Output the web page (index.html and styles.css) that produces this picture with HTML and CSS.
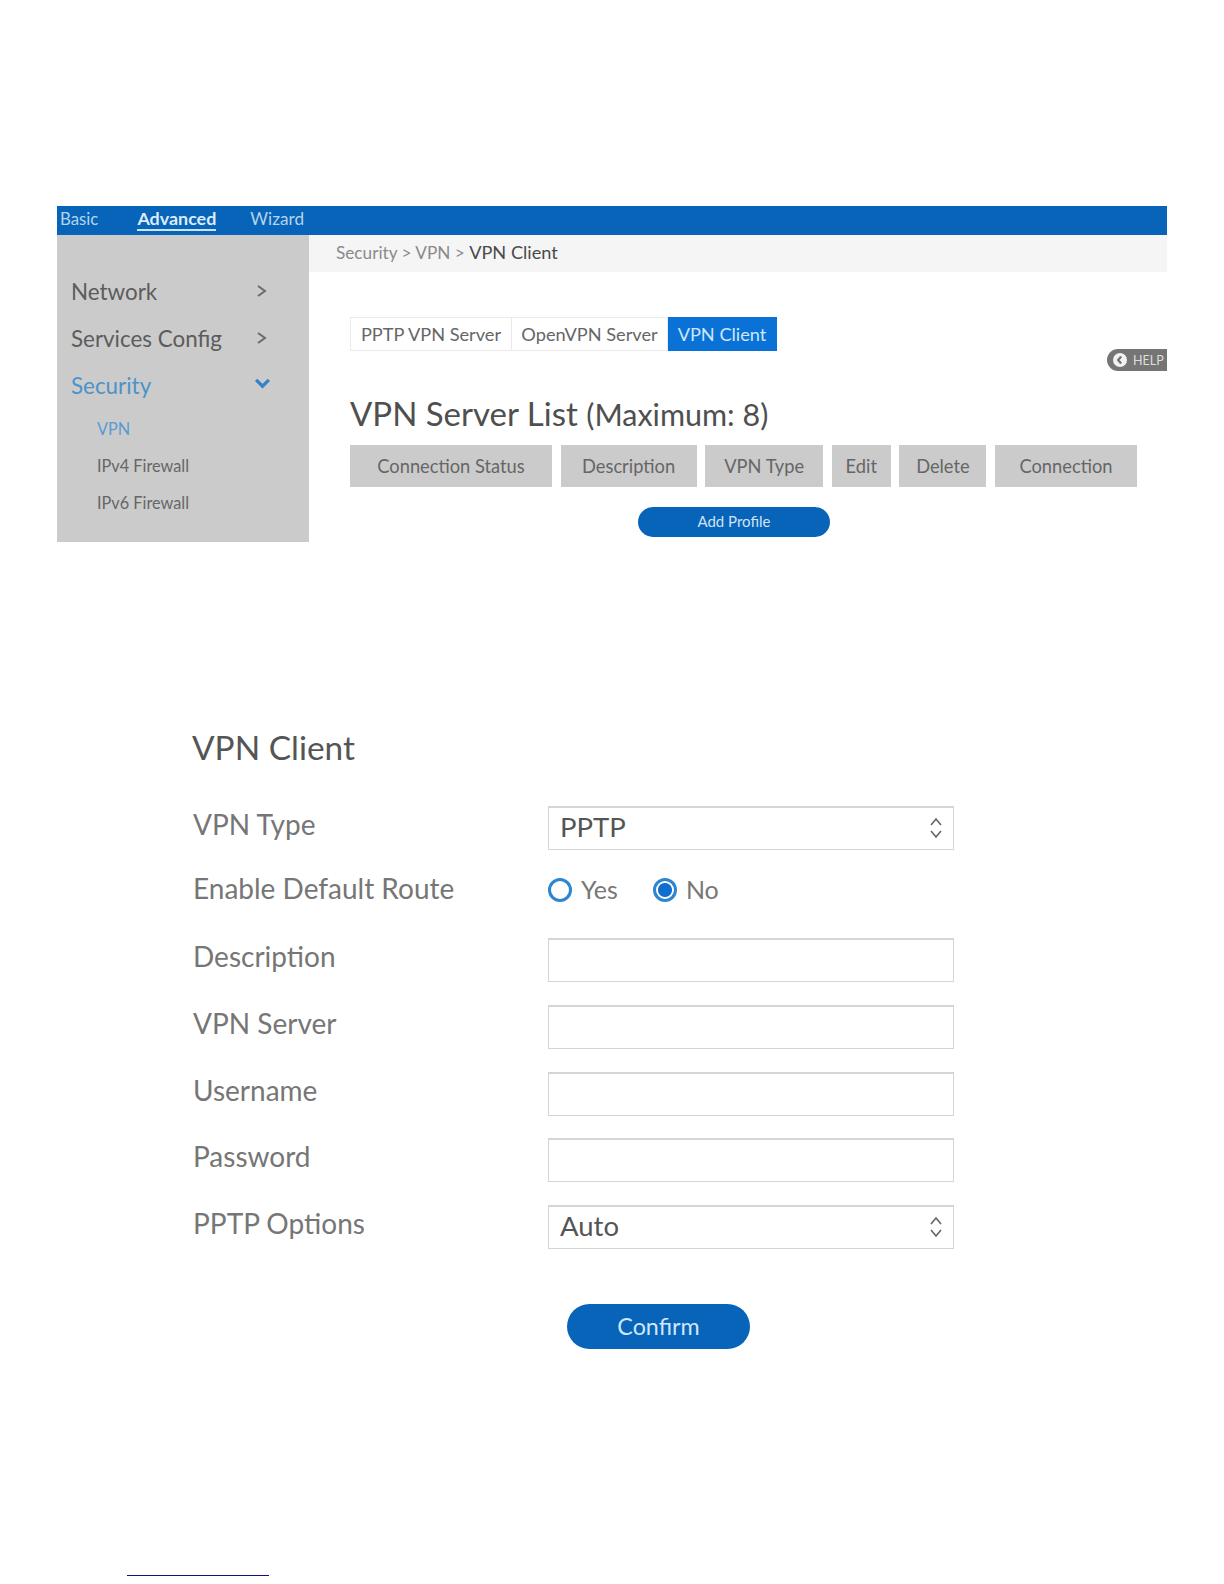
FILE: index.html
```html
<!DOCTYPE html>
<html lang="en">
<head>
<meta charset="utf-8">
<title>VPN Client</title>
<link rel="stylesheet" href="styles.css">
</head>
<body>
<section class="router">
  <nav class="topbar">
    <span class="top-link first">Basic</span>
    <span class="top-link active">Advanced</span>
    <span class="top-link last">Wizard</span>
  </nav>
  <div class="router-body">
    <aside class="sidebar">
      <div class="side-item"><span>Network</span>
        <svg class="chev" viewBox="0 0 12 14"><path d="M2 2l7 5-7 5"/></svg></div>
      <div class="side-item"><span>Services Config</span>
        <svg class="chev" viewBox="0 0 12 14"><path d="M2 2l7 5-7 5"/></svg></div>
      <div class="side-item current"><span>Security</span>
        <svg class="chev down" viewBox="0 0 16 12"><path d="M2 2.5l6 6 6-6"/></svg></div>
      <div class="sub-item current">VPN</div>
      <div class="sub-item">IPv4 Firewall</div>
      <div class="sub-item">IPv6 Firewall</div>
    </aside>
    <main class="content">
      <div class="crumbs">Security &gt; VPN &gt; <span class="crumb-now">VPN Client</span></div>
      <div class="tabs-row">
        <div class="tabs">
          <span class="tab t1">PPTP VPN Server</span>
          <span class="tab t2">OpenVPN Server</span>
          <span class="tab t3 selected">VPN Client</span>
        </div>
        <div class="help">
          <svg class="help-icon" viewBox="0 0 12 12"><circle cx="6" cy="6" r="6"/><path d="M7 3L4.4 6 7 9"/></svg>
          <span>HELP</span>
        </div>
      </div>
      <h2 class="list-title">VPN Server List <span class="list-max">(Maximum: 8)</span></h2>
      <div class="columns">
        <span class="col c1">Connection Status</span>
        <span class="col c2">Description</span>
        <span class="col c3">VPN Type</span>
        <span class="col c4">Edit</span>
        <span class="col c5">Delete</span>
        <span class="col c6">Connection</span>
      </div>
      <div class="add-wrap"><button class="add-btn">Add Profile</button></div>
    </main>
  </div>
</section>

<section class="form">
  <h1 class="form-title">VPN Client</h1>
  <div class="form-row r-type">
    <label>VPN Type</label>
    <div class="field select"><span>PPTP</span>
      <svg class="updown" viewBox="0 0 14 22"><path d="M2 8Q5 4.500 7 2Q9 4.500 12 8M2 14Q5 17.500 7 20Q9 17.500 12 14"/></svg></div>
  </div>
  <div class="form-row r-radio">
    <label>Enable Default Route</label>
    <div class="radios">
      <span class="radio"></span><span class="radio-text yes">Yes</span>
      <span class="radio on"></span><span class="radio-text">No</span>
    </div>
  </div>
  <div class="form-row r-input"><label>Description</label><div class="field"></div></div>
  <div class="form-row r-input"><label>VPN Server</label><div class="field"></div></div>
  <div class="form-row r-input"><label>Username</label><div class="field"></div></div>
  <div class="form-row r-input"><label>Password</label><div class="field"></div></div>
  <div class="form-row r-input"><label>PPTP Options</label>
    <div class="field select"><span>Auto</span>
      <svg class="updown" viewBox="0 0 14 22"><path d="M2 8Q5 4.500 7 2Q9 4.500 12 8M2 14Q5 17.500 7 20Q9 17.500 12 14"/></svg></div>
  </div>
  <div class="confirm-wrap"><button class="confirm">Confirm</button></div>
</section>

<div class="foot-rule"></div>
</body>
</html>
```

FILE: styles.css
```css
* { box-sizing: border-box; }
html, body { margin: 0; padding: 0; background: #fff; }
body {
  width: 1224px;
  height: 1584px;
  overflow: hidden;
  font-family: "Lato", "Open Sans", sans-serif;
  color: #555;
  padding-top: 206px;
}
.router { margin-left: 57px; width: 1110px; height: 336px; display: flex; flex-direction: column; }
.topbar {
  height: 29px; background: #0764b8; display: flex; align-items: center;
  font-size: 16.800px; color: #b5d4ee; flex: none;
}
.top-link { margin-bottom: 5px; }
.top-link.first { margin-left: 3px; }
.top-link.active {
  margin-left: 39px; color: #dcecf8; font-weight: 700; font-size: 17.900px;
  border-bottom: 2px solid #cfe3f5; line-height: 21px; margin-bottom: 2px;
}
.top-link.last { margin-left: 34px; font-size: 17.200px; }
.router-body { flex: 1; display: flex; min-height: 0; }
.sidebar { width: 252px; background: #cbcbcb; padding-top: 34px; flex: none; }
.side-item {
  height: 47px; padding: 0 41px 2px 14px; display: flex; justify-content: space-between; align-items: center;
  font-size: 22.400px; color: #5c5c5c;
}
.side-item.current { color: #4c93c9; }
.chev { width: 12px; height: 16px; fill: none; stroke: #6a6a6a; stroke-width: 2; margin-bottom: 1px; }
.chev.down { width: 17px; height: 13px; stroke: #2f83c6; stroke-width: 3; margin-right: -3px; margin-bottom: 4px; }
.sub-item { height: 37px; padding: 0 0 1px 40px; font-size: 16.300px; color: #666; display: flex; align-items: center; }
.sub-item.current { color: #5a9bd0; }
.content { flex: 1; min-width: 0; }
.crumbs {
  height: 37px; background: #f5f5f5; padding: 0 0 3px 27px; font-size: 17.200px; color: #8a8a8a;
  display: flex; align-items: center; white-space: pre;
}
.crumb-now { color: #4a4a4a; font-size: 18.200px; }
.tabs-row { margin-left: 41px; padding-top: 45px; display: flex; justify-content: space-between; align-items: flex-start; height: 114px; }
.tabs { display: flex; height: 34px; }
.tab {
  height: 34px; display: flex; align-items: center; justify-content: center; font-size: 18.200px; color: #666;
  border: 1px solid #eaeaea; white-space: nowrap;
}
.t1 { width: 162px; } .t2 { width: 156px; } .t3 { width: 109px; }
.tab + .tab { border-left: 0; }
.tab.selected { background: #0a72d6; color: #cfe6fb; border-color: #0a72d6; }
.help {
  width: 60px; height: 22px; margin-top: 32px; background: #757575; border-radius: 11px 0 0 11px;
  display: flex; align-items: center; color: #ddd; font-size: 12.500px; padding-left: 6px; gap: 6px;
}
.help-icon { width: 14px; height: 14px; flex: none; }
.help-icon circle { fill: #f2f2f2; }
.help-icon path { fill: none; stroke: #757575; stroke-width: 2; }
.list-title {
  margin: 0 0 0 41px; height: 59px; font-weight: 400; font-size: 33px; line-height: 55px; color: #4f4f4f;
  white-space: nowrap;
}
.list-max { font-size: 30.500px; }
.columns { margin-left: 41px; display: flex; gap: 8.600px; height: 42px; }
.col {
  background: #cbcbcb; display: flex; align-items: center; justify-content: center;
  font-size: 18.300px; color: #666; padding-bottom: 1px;
}
.c1 { width: 202px; } .c2 { width: 136px; } .c3 { width: 118px; }
.c4 { width: 59px; } .c5 { width: 87px; } .c6 { width: 142px; }
.add-wrap { margin: 20px 0 0 329px; }
.add-btn {
  display: block; width: 192px; height: 30px; border: 0; border-radius: 15px; background: #0764b8; color: #cfe3f5;
  font-family: inherit; font-size: 15px; padding: 0 0 2px;
}
.form { margin-left: 191px; width: 763px; padding-top: 184px; }
.form-title { margin: 0; height: 80px; font-weight: 400; font-size: 33.400px; line-height: 42px; color: #555; padding-left: 1px; }
.form-row { display: flex; align-items: flex-start; }
.form-row label { width: 357px; padding-left: 2px; font-size: 28px; line-height: 40px; color: #767676; flex: none; margin-top: -2px; }
.r-type { height: 68px; }
.r-radio { height: 64px; }
.r-radio label { margin-top: -6px; }
.r-input { height: 66.750px; }
.field {
  width: 406px; height: 44px; border: 1px solid #d5d5d5; border-top-width: 2px; background: #fff;
  display: flex; align-items: center; justify-content: space-between; padding: 0 10px 0 11px;
  font-size: 27.500px; color: #555;
}
.field span { margin-bottom: 5px; }
.updown { width: 14px; height: 22px; fill: none; stroke: #666; stroke-width: 1.600; margin-bottom: 1px; }
.radios { display: flex; align-items: center; height: 34px; margin-top: -1px; }
.radio {
  width: 24px; height: 24px; border-radius: 50%; border: 3px solid #2e86cf; background: #fff; flex: none;
}
.radio.on { background: radial-gradient(circle, #0f6fcf 0 6.500px, #fff 7.500px); }
.radio-text { margin-left: 9px; font-size: 25px; color: #777; margin-bottom: 3px; }
.radio-text.yes { margin-right: 35px; }
.confirm-wrap { margin: 32px 0 0 376px; }
.confirm {
  display: block; width: 183px; height: 45px; border: 0; border-radius: 23px; background: #0764b8; color: #cfe6fb;
  font-family: inherit; font-size: 23.300px; padding: 0;
}
.foot-rule { width: 142px; height: 1px; background: #10108a; margin: 226px 0 0 127px; }
```
